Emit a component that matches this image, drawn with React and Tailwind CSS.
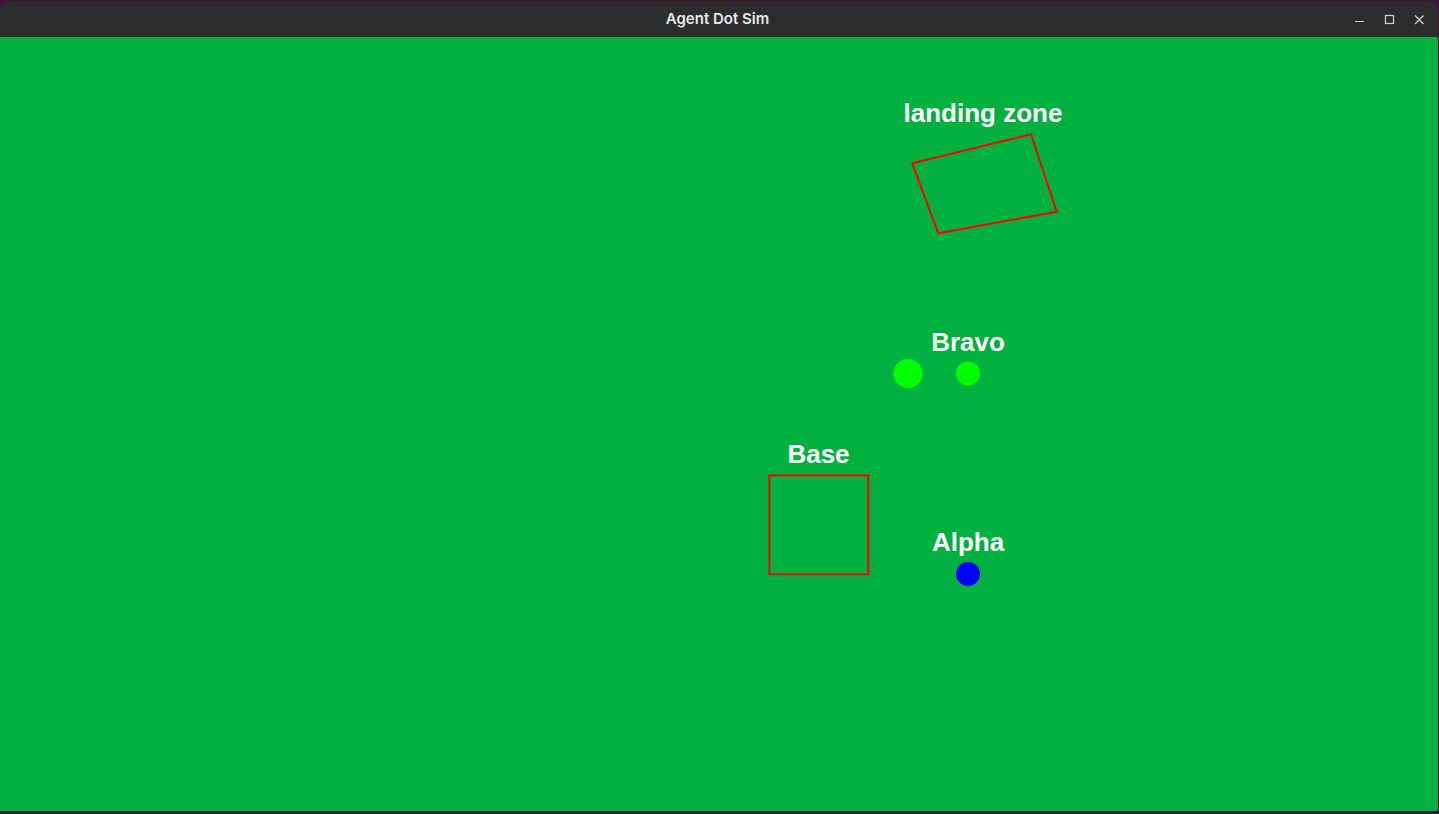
const Label = ({ x, top, children }) => {
  return (
    <div
      className="absolute -translate-x-1/2 whitespace-nowrap font-['Liberation_Sans',Arial,sans-serif] text-[26px] font-bold leading-none text-white"
      style={{ left: x, top }}
    >
      {children}
    </div>
  );
};

const WindowControls = () => {
  return (
    <div className="absolute right-0 top-0 flex h-full items-center">
      <svg width="99" height="36" viewBox="0 0 99 36" className="text-[#d2d2d2]">
        {/* minimize */}
        <line x1="16" y1="20.5" x2="25" y2="20.5" stroke="currentColor" strokeWidth="1.2" />
        {/* maximize */}
        <rect x="46.5" y="14.5" width="8" height="8" fill="none" stroke="currentColor" strokeWidth="1.2" />
        {/* close */}
        <path d="M76 14.5 L84.5 23 M84.5 14.5 L76 23" stroke="currentColor" strokeWidth="1.3" />
      </svg>
    </div>
  );
};

const App = () => {
  return (
    <div className="flex h-[814px] w-[1439px] flex-col bg-[#3f1634] pb-[3px] pr-px pt-px">
      <div className="flex flex-1 flex-col overflow-hidden rounded-t-[12px]">
        <div className="relative flex h-[36px] flex-none items-center justify-center bg-[#2d2d2d]">
          <span className="-ml-[3px] font-['Inter',sans-serif] text-[15px] font-semibold text-[#e8e8e8]">
            Agent Dot Sim
          </span>
          <WindowControls />
        </div>

        <div className="relative flex-1 bg-[#00b140]">
          <svg className="absolute left-0 top-0" width="1438" height="774">
            <polygon
              points="912.3,126.3 1031,97.3 1056.7,174.7 938.3,196.3"
              fill="none"
              stroke="#ff0000"
              strokeWidth="2"
            />
            <rect x="769.3" y="438.3" width="99" height="99" fill="none" stroke="#ff0000" strokeWidth="2" />
            <circle cx="908" cy="336.5" r="14.5" fill="#00ff00" />
            <circle cx="968" cy="336.5" r="12" fill="#00ff00" />
            <circle cx="968" cy="537" r="12" fill="#0000ff" />
          </svg>

          <Label x={983} top={63}>landing zone</Label>
          <Label x={968} top={292}>Bravo</Label>
          <Label x={818.5} top={404}>Base</Label>
          <Label x={968} top={492}>Alpha</Label>
        </div>
      </div>
    </div>
  );
};

export default App;
